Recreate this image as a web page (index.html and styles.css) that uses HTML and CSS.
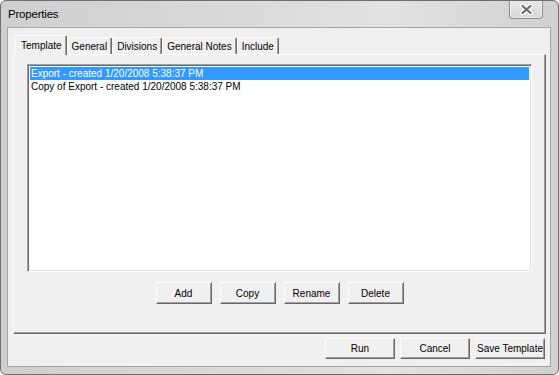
FILE: index.html
```html
<!DOCTYPE html>
<html lang="en">
<head>
    <meta charset="UTF-8">
    <meta name="viewport" content="width=device-width, initial-scale=1.0">
    <title>Properties</title>
    <link rel="stylesheet" href="styles.css">
</head>
<body>
    <div class="window">
        <!-- Barra de titulo -->
        <div class="titlebar">
            <span class="title">Properties</span>
            <button class="close" title="Close">
                <svg width="15" height="11" viewBox="0 0 15 11">
                    <path d="M3.5 2 L11.5 9 M11.5 2 L3.5 9" stroke="#fff" stroke-width="4.5" stroke-linecap="round"/>
                    <path d="M3.5 2 L11.5 9 M11.5 2 L3.5 9" stroke="#6a6a6a" stroke-width="2.2" stroke-linecap="round"/>
                </svg>
            </button>
        </div>

        <div class="client">
            <div class="tabcontrol">
                <div class="tabrow">
                    <div class="tab selected">Template</div>
                    <div class="tab">General</div>
                    <div class="tab">Divisions</div>
                    <div class="tab">General Notes</div>
                    <div class="tab">Include</div>
                </div>
                <div class="panel">
                    <div class="listbox">
                        <div class="item selected">Export - created 1/20/2008 5:38:37 PM</div>
                        <div class="item">Copy of Export - created 1/20/2008 5:38:37 PM</div>
                    </div>
                    <div class="actions">
                        <button class="btn">Add</button>
                        <button class="btn">Copy</button>
                        <button class="btn">Rename</button>
                        <button class="btn">Delete</button>
                    </div>
                </div>
            </div>

            <div class="footer">
                <button class="btn wide">Run</button>
                <button class="btn wide">Cancel</button>
                <button class="btn wide">Save Template</button>
            </div>
        </div>
    </div>
</body>
</html>
```

FILE: styles.css
```css
body {
    margin: 0;
    background: #ffffff;
    font-family: "Liberation Sans", Arial, sans-serif;
    font-size: 10px;
    color: #000;
}

.window {
    width: 559px;
    height: 375px;
    box-sizing: border-box;
    border: 1px solid #6e6e6e;
    border-radius: 6px;
    background: linear-gradient(to right, #cfcfcf, #dadada 45%, #e2e2e2 70%, #d0d0d0);
    display: flex;
    flex-direction: column;
    overflow: hidden;
}

.titlebar {
    height: 26px;
    display: flex;
    align-items: flex-start;
    flex-shrink: 0;
}

.title {
    font-size: 11.5px;
    margin: 7px 0 0 7px;
    letter-spacing: -0.2px;
    color: #000;
}

.close {
    margin: -1px 15px 0 auto;
    width: 34px;
    height: 19px;
    padding: 0;
    border: 1px solid #8c8c8c;
    border-top: none;
    border-radius: 0 0 4px 4px;
    background: linear-gradient(#e9e9e9, #d6d6d6);
    box-shadow: inset 0 0 0 1px rgba(255,255,255,0.6);
    display: flex;
    align-items: center;
    justify-content: center;
}

.client {
    margin: 0 7px 7px 6px;
    flex: 1;
    border: 1px solid #a5a5a5;
    background: #f0f0f0;
    display: flex;
    flex-direction: column;
    padding: 7px 4px 0 5px;
}

.tabcontrol {
    display: flex;
    flex-direction: column;
    width: 533px;
}

.tabrow {
    height: 19px;
    display: flex;
    align-items: flex-end;
    padding-left: 2px;
}

.tab {
    height: 17px;
    box-sizing: border-box;
    padding: 3px 4px 0 4px;
    border-top: 1px solid #fff;
    border-left: 1px solid #fff;
    border-right: 1px solid #696969;
    box-shadow: inset -1px 0 #a0a0a0;
    border-radius: 2px 2px 0 0;
    white-space: nowrap;
}

.tab.selected {
    height: 20px;
    margin-bottom: -1px;
    padding: 4px 4px 0 5px;
    background: #f0f0f0;
    position: relative;
    z-index: 1;
}

.panel {
    height: 280px;
    box-sizing: border-box;
    border-top: 1px solid #fff;
    border-left: 1px solid #fff;
    border-right: 1px solid #696969;
    border-bottom: 1px solid #696969;
    box-shadow: inset -1px -1px #a0a0a0;
    padding: 9px 0 0 13px;
}

.listbox {
    width: 505px;
    height: 208px;
    box-sizing: border-box;
    background: #fff;
    border-top: 1px solid #a0a0a0;
    border-left: 1px solid #a0a0a0;
    border-right: 1px solid #fff;
    border-bottom: 1px solid #fff;
    box-shadow: inset 1px 1px #696969, inset -1px -1px #e3e3e3;
    padding: 2px 2px 0 2px;
}

.item {
    height: 13px;
    line-height: 13px;
    padding-left: 1px;
    white-space: nowrap;
}

.item.selected {
    background: #3399ff;
    color: #fff;
}

.actions {
    display: flex;
    justify-content: center;
    gap: 8px;
    margin-top: 10px;
    padding-right: 13px;
}

.btn {
    width: 56px;
    height: 22px;
    padding: 0;
    font-family: "Liberation Sans", Arial, sans-serif;
    font-size: 10px;
    color: #000;
    white-space: nowrap;
    background: #f0f0f0;
    border-top: 1px solid #fff;
    border-left: 1px solid #fff;
    border-right: 1px solid #696969;
    border-bottom: 1px solid #696969;
    box-shadow: inset -1px -1px #a0a0a0;
}

.footer {
    display: flex;
    justify-content: flex-end;
    gap: 5px;
    margin-top: 4px;
    padding-right: 1px;
}

.btn.wide {
    width: 70px;
    height: 21px;
}
```
